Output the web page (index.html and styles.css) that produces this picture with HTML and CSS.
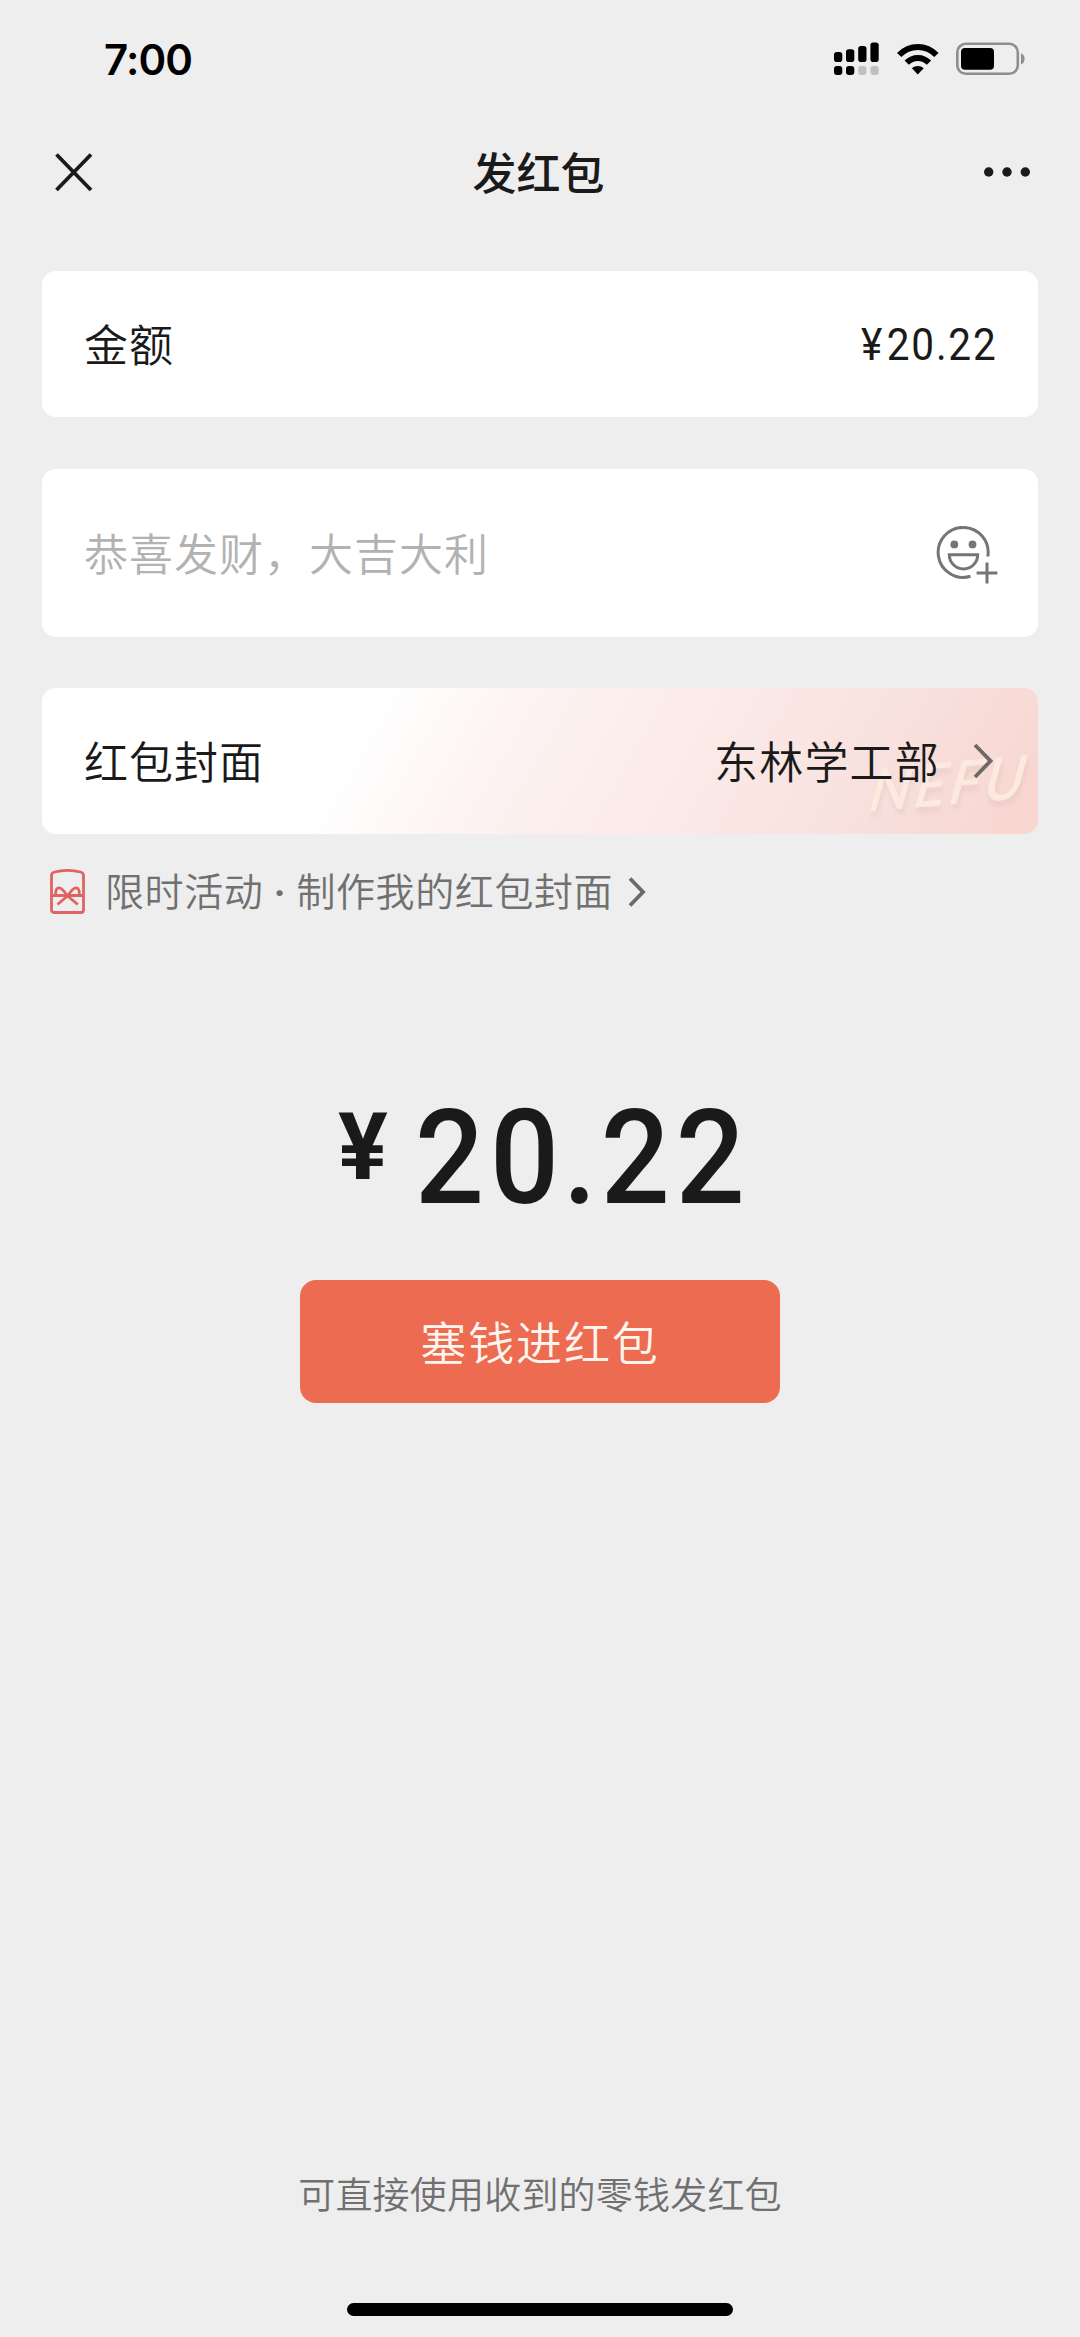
FILE: index.html
```html
<!DOCTYPE html>
<html lang="zh-CN">
<head>
<meta charset="utf-8">
<title>发红包</title>
<link rel="stylesheet" href="styles.css">
</head>
<body>
<div class="screen">
  <header class="status">
    <span class="time">7:00</span>
    <div class="status-icons">
      <svg class="signal" width="46" height="34" viewBox="0 0 46 34">
        <rect x="0" y="10" width="8.3" height="10" rx="2.8"/>
        <rect x="12" y="7.3" width="8.3" height="12.7" rx="2.8"/>
        <rect x="24.2" y="4" width="8.3" height="16" rx="2.8"/>
        <rect x="36.4" y="0.4" width="8.3" height="19.6" rx="2.8"/>
        <rect x="0" y="24" width="8.3" height="9" rx="3"/>
        <rect x="12" y="24" width="8.3" height="9" rx="3"/>
        <rect class="dim" x="24.2" y="24" width="8.3" height="9" rx="3"/>
        <rect class="dim" x="36.4" y="24" width="8.3" height="9" rx="3"/>
      </svg>
      <svg class="wifi" width="42" height="32" viewBox="0 0 42 32">
        <path class="arc" d="M2.200 12C12.500 1.200 29.300 1.200 39.400 12"/>
        <path class="arc" d="M9.700 19.700C16 13.400 25.700 13.400 32 19.700"/>
        <path d="M14.900 25.200C18.300 22.100 23.300 22.100 26.700 25.200L20.800 31.400Z"/>
      </svg>
      <svg class="battery" width="70" height="34" viewBox="0 0 70 34">
        <rect class="shell" x="1.300" y="1.800" width="60.500" height="30" rx="8.500"/>
        <rect x="5" y="6" width="33" height="21.700" rx="4"/>
        <path class="nub" d="M65 11.200C69.800 13 69.800 20.600 65 22.400Z"/>
      </svg>
    </div>
  </header>

  <nav class="navbar">
    <svg width="38" height="40" viewBox="0 0 38 40"><path class="close" d="M1.500 2.500L36 38M36 2.500L1.500 38"/></svg>
    <h1 class="title">发红包</h1>
    <svg width="48" height="12" viewBox="0 0 48 12"><circle cx="5.700" cy="6" r="4.700"/><circle cx="24" cy="6" r="4.700"/><circle cx="42.300" cy="6" r="4.700"/></svg>
  </nav>

  <main class="content">
    <section class="card amount">
      <span class="label">金额</span>
      <span class="value">¥<span class="digits">20.22</span></span>
    </section>
    <section class="card message">
      <span class="label placeholder">恭喜发财，大吉大利</span>
      <svg class="emoji" width="62" height="60" viewBox="0 0 62 60">
        <path d="M51.800 30.500A25 25 0 1 0 34.500 50.300"/>
        <path d="M13.300 28.700H41.700A14.200 14.200 0 0 1 13.300 28.700Z"/>
        <circle class="eye" cx="18.300" cy="18.400" r="3.900"/>
        <circle class="eye" cx="36.500" cy="18.400" r="3.900"/>
        <path d="M40.600 47H61.400M51 36.500V57.500"/>
      </svg>
    </section>
    <section class="card cover">
      <span class="watermark"><i>N</i><i>E</i><i>F</i><i>U</i></span>
      <span class="label">红包封面</span>
      <span class="cover-name"><span class="label">东林学工部</span>
        <svg width="20" height="36" viewBox="0 0 20 36"><path class="chevron" d="M2 2L17.500 18L2 34"/></svg>
      </span>
    </section>
    <div class="promo">
      <svg class="packet" width="35" height="46" viewBox="0 0 35 46">
        <path d="M1.500 41V6.500C1.500 4.500 2.500 3.500 4.500 3C13 .9 22 .9 30.500 3C32.500 3.500 33.500 4.500 33.500 6.500V41Q33.500 43.500 31 43.500H4Q1.500 43.500 1.500 41ZM1.500 26.500H33.500"/>
        <path d="M17.500 27C14 21.500 10.500 18 8 19C5.500 20.200 5.500 24 5.800 26.500M17.500 27C21 21.500 24.500 18 27 19C29.500 20.200 29.500 24 29.200 26.500M17.500 27L7.500 35.500M17.500 27L27.800 35.500"/>
      </svg>
      <span class="promo-text">限时活动<span class="dot"> · </span>制作我的红包封面</span>
      <svg width="18" height="32" viewBox="0 0 18 32"><path class="chevron" d="M2 2.500L15 16L2 29.500"/></svg>
    </div>
    <div class="total"><span class="yen">¥</span><span class="sum">20<span class="point">.</span>22</span></div>
    <button class="pay">塞钱进红包</button>
  </main>

  <footer class="footer">
    <p class="note">可直接使用收到的零钱发红包</p>
    <div class="home"></div>
  </footer>
</div>
</body>
</html>
```
FILE: styles.css
```css
* { box-sizing: border-box; }
body {
  margin: 0;
  background: #eee;
  color: #1a1a1a;
  font-family: "Noto Sans CJK SC", sans-serif;
}
svg { display: block; flex: none; }
.screen {
  width: 1080px;
  height: 2337px;
  display: flex;
  flex-direction: column;
}
.status {
  height: 117px;
  padding: 0 54px 0 104px;
  display: flex;
  align-items: center;
  justify-content: space-between;
}
.time {
  font: 600 42px/50px Inter, sans-serif;
  letter-spacing: -0.9px;
  color: #000;
  padding-top: 2px;
}
.status-icons { display: flex; align-items: center; gap: 17px; }
.dim { fill: #bfbfbf; }
.arc { fill: none; stroke: #000; stroke-width: 6; }
.shell { fill: none; stroke: #8e8e8e; stroke-width: 2.6; }
.nub { fill: #8e8e8e; }
.navbar {
  height: 110px;
  padding: 0 49px 0 55px;
  display: grid;
  grid-template-columns: 48px 1fr 48px;
  align-items: center;
  fill: #1a1a1a;
}
.close { fill: none; stroke: #1a1a1a; stroke-width: 3.8; }
.title {
  margin: 0;
  padding: 0 9px 3px 0;
  font-size: 44px;
  line-height: 60px;
  font-weight: 500;
  text-align: center;
}
.content {
  padding: 44px 42px 0;
  display: flex;
  flex-direction: column;
}
.card {
  height: 146px;
  padding: 0 42px;
  border-radius: 14px;
  background: #fff;
  display: flex;
  align-items: center;
  justify-content: space-between;
  font-size: 44px;
  line-height: 60px;
  letter-spacing: 1px;
  font-weight: 350;
}
.label { padding-bottom: 3px; }
.value {
  padding-top: 2px;
  font: 400 45px/60px Roboto, sans-serif;
  letter-spacing: 2px;
  transform: scaleX(.9);
  transform-origin: right center;
}
.digits { margin-left: 3px; margin-right: -2px; }
.message { height: 168px; margin-top: 52px; }
.placeholder { color: #b2b2b2; }
.emoji { fill: none; stroke: #757575; stroke-width: 3; margin: 5px -2px 0 0; }
.eye { fill: #757575; stroke: none; }
.cover {
  position: relative;
  margin-top: 51px;
  overflow: hidden;
  background: linear-gradient(120deg, #fff 32%, #fdf3f2 46%, #fbebe9 62%, #f8e2df 80%, #f8d7d3 96%);
}
.cover-name { display: flex; align-items: center; gap: 35px; position: relative; margin-right: 3px; }
.cover-name .label { margin-right: -2px; letter-spacing: 1.200px; }
.chevron { fill: none; stroke: #6e6866; stroke-width: 3.800; }
.watermark {
  position: absolute;
  left: 829px;
  top: 62px;
  display: flex;
  gap: 3px;
  font: 400 58px/64px Lato, sans-serif;
  color: #fbeadd;
  -webkit-text-stroke: 1px #fbeadd;
  transform: rotate(-5deg) skewX(-14deg);
  text-shadow: 2px 6px 5px rgba(190, 150, 140, .22);
}
.promo {
  height: 116px;
  padding-left: 8px;
  display: flex;
  align-items: center;
  color: #707070;
}
.packet { fill: none; stroke: #df6461; stroke-width: 2.800; }
.promo-text {
  margin: 0 15px 0 20px;
  padding-bottom: 3px;
  font-size: 39px;
  font-weight: 350;
  line-height: 56px;
  letter-spacing: 0.6px;
}
.dot { font-family: Roboto, sans-serif; font-weight: 700; }
.total {
  height: 154px;
  margin-top: 131px;
  padding-left: 296px;
  display: flex;
  font: 500 132px/154px Roboto, sans-serif;
}
.yen { width: 77px; font-size: 93px; font-weight: 700; line-height: 134px; }
.sum { letter-spacing: 6.4px; transform: scaleX(.92); transform-origin: left center; }
.point { margin: 0 -2px; }
.pay {
  width: 480px;
  height: 123px;
  margin: 45px auto 0;
  padding: 0 0 4px;
  border: 0;
  border-radius: 16px;
  background: #ec6b51;
  color: #fff5ef;
  font: 350 46px/60px "Noto Sans CJK SC", sans-serif;
  letter-spacing: 1.9px;
}
.footer {
  margin-top: auto;
  padding-bottom: 21px;
  display: flex;
  flex-direction: column;
  align-items: center;
}
.note {
  margin: 0 0 83px;
  font-size: 37px;
  line-height: 54px;
  font-weight: 350;
  letter-spacing: 0.2px;
  color: #707070;
}
.home { width: 386px; height: 13px; border-radius: 7px; background: #000; }
```
